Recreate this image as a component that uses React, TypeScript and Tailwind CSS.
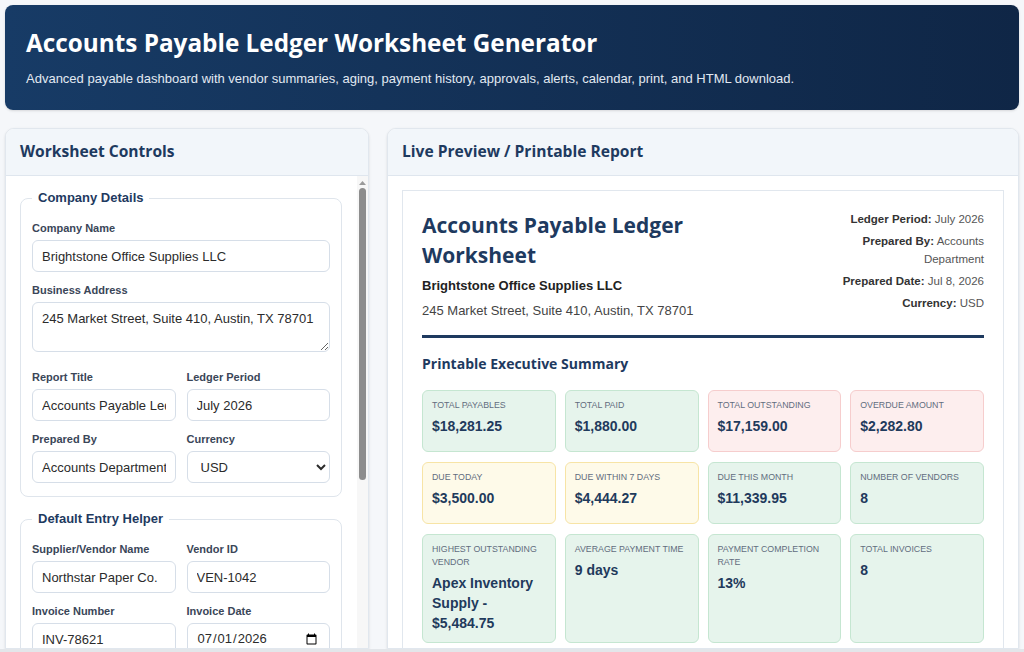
import { type ReactNode } from 'react';

const inputCls =
    'block h-[32px] w-full rounded-[6px] border border-[#d6dee8] bg-white px-[9px] text-[13px] text-[#2b2b2b] outline-none';

function Label({ children }: { children: ReactNode }) {
    return (
        <label className="mb-[5px] block text-[11px] font-bold leading-[14px] text-[#3a4658]">
            {children}
        </label>
    );
}

function Field({ label, children }: { label: string; children: ReactNode }) {
    return (
        <div>
            <Label>{label}</Label>
            {children}
        </div>
    );
}

function Group({ title, children }: { title: string; children: ReactNode }) {
    return (
        <fieldset className="rounded-[8px] border border-[#dfe5ec] px-[11px] pb-[13px] pt-[15px]">
            <legend className="px-[6px] text-[13px] font-bold leading-[16px] text-[#1e3a5f]">
                {title}
            </legend>
            {children}
        </fieldset>
    );
}

type Tone = 'green' | 'red' | 'yellow';

const tones: Record<Tone, string> = {
    green: 'bg-[#e6f4ec] border-[#c5e6d1]',
    red: 'bg-[#fdeeee] border-[#f6cdcd]',
    yellow: 'bg-[#fefae9] border-[#f7e4a6]',
};

function StatCard({
    label,
    value,
    tone,
}: {
    label: string;
    value: string;
    tone: Tone;
}) {
    return (
        <div
            className={`min-h-[62px] rounded-[6px] border px-[9px] pb-[9px] pt-[8px] ${tones[tone]}`}
        >
            <div className="mb-[4px] text-[8.8px] uppercase leading-[13px] text-[#626d7e]">
                {label}
            </div>
            <div className="text-[14px] font-bold leading-[20px] text-[#1f3a5c]">
                {value}
            </div>
        </div>
    );
}

const stats: { label: string; value: string; tone: Tone }[] = [
    { label: 'Total Payables', value: '$18,281.25', tone: 'green' },
    { label: 'Total Paid', value: '$1,880.00', tone: 'green' },
    { label: 'Total Outstanding', value: '$17,159.00', tone: 'red' },
    { label: 'Overdue Amount', value: '$2,282.80', tone: 'red' },
    { label: 'Due Today', value: '$3,500.00', tone: 'yellow' },
    { label: 'Due Within 7 Days', value: '$4,444.27', tone: 'yellow' },
    { label: 'Due This Month', value: '$11,339.95', tone: 'green' },
    { label: 'Number of Vendors', value: '8', tone: 'green' },
    {
        label: 'Highest Outstanding Vendor',
        value: 'Apex Inventory Supply - $5,484.75',
        tone: 'green',
    },
    { label: 'Average Payment Time', value: '9 days', tone: 'green' },
    { label: 'Payment Completion Rate', value: '13%', tone: 'green' },
    { label: 'Total Invoices', value: '8', tone: 'green' },
];

function Meta({ k, v }: { k: string; v: string }) {
    return (
        <p className="text-[11.5px] leading-[18px] text-[#555]">
            <span className="font-bold text-[#333]">{k}:</span> {v}
        </p>
    );
}

function Panel({ title, children }: { title: string; children: ReactNode }) {
    return (
        <section className="flex min-h-0 flex-col overflow-hidden rounded-t-[9px] border border-[#e1e7ee] bg-white shadow-sm">
            <div className="flex h-[47px] shrink-0 items-center border-b border-[#dfe6ee] bg-[#f2f6fa] px-[14px]">
                <h2 className="font-['Open_Sans',sans-serif] text-[15.6px] font-bold text-[#1e3a5f]">
                    {title}
                </h2>
            </div>
            {children}
        </section>
    );
}

function ScrollBar() {
    return (
        <div className="flex w-[11px] shrink-0 flex-col items-center bg-[#f7f7f7] pt-[5px]">
            <svg width="7" height="4" viewBox="0 0 7 4">
                <path d="M3.5 0 7 4H0z" fill="#9a9a9a" />
            </svg>
            <div className="mt-[3px] h-[292px] w-[7px] rounded-full bg-[#8d8d8d]" />
        </div>
    );
}

export default function App() {
    return (
        <div className="flex h-screen flex-col overflow-hidden bg-[#f5f7fa] font-['Liberation_Sans',Arial,sans-serif]">
            <div className="flex min-h-0 flex-1 flex-col gap-[18px] px-[5px] pt-[5px]">
                <header className="h-[105px] shrink-0 rounded-[8px] bg-linear-to-r from-[#173b66] to-[#0f2646] px-[21px] pt-[22px] shadow-sm">
                    <h1 className="font-['Open_Sans',sans-serif] text-[24.3px] font-bold leading-[32px] text-white">
                        Accounts Payable Ledger Worksheet Generator
                    </h1>
                    <p className="mt-[10px] text-[13px] leading-[20px] text-[#e2e9f2]">
                        Advanced payable dashboard with vendor summaries, aging,
                        payment history, approvals, alerts, calendar, print, and
                        HTML download.
                    </p>
                </header>

                <div className="grid min-h-0 flex-1 grid-cols-[364px_1fr] gap-[18px]">
                    <Panel title="Worksheet Controls">
                        <div className="flex min-h-0 flex-1">
                            <div className="min-w-0 flex-1 overflow-hidden pb-[15px] pl-[14px] pr-[15px] pt-[14px]">
                                <Group title="Company Details">
                                    <div className="mb-[11px]">
                                        <Field label="Company Name">
                                            <input
                                                className={inputCls}
                                                defaultValue="Brightstone Office Supplies LLC"
                                            />
                                        </Field>
                                    </div>
                                    <div className="mb-[18px]">
                                        <Field label="Business Address">
                                            <textarea
                                                className="block h-[50px] w-full resize-y rounded-[6px] border border-[#d6dee8] bg-white px-[9px] py-[7px] text-[13px] leading-[18px] text-[#2b2b2b] outline-none"
                                                defaultValue="245 Market Street, Suite 410, Austin, TX 78701"
                                            />
                                        </Field>
                                    </div>
                                    <div className="grid grid-cols-2 gap-x-[11px] gap-y-[11px]">
                                        <Field label="Report Title">
                                            <input
                                                className={inputCls}
                                                defaultValue="Accounts Payable Ledger Worksheet"
                                            />
                                        </Field>
                                        <Field label="Ledger Period">
                                            <input
                                                className={inputCls}
                                                defaultValue="July 2026"
                                            />
                                        </Field>
                                        <Field label="Prepared By">
                                            <input
                                                className={inputCls}
                                                defaultValue="Accounts Department"
                                            />
                                        </Field>
                                        <Field label="Currency">
                                            <select
                                                className={inputCls}
                                                defaultValue="USD"
                                            >
                                                <option>USD</option>
                                                <option>EUR</option>
                                                <option>GBP</option>
                                            </select>
                                        </Field>
                                    </div>
                                </Group>

                                <div className="mt-[14px]">
                                    <Group title="Default Entry Helper">
                                        <div className="grid grid-cols-2 gap-x-[11px] gap-y-[11px]">
                                            <Field label="Supplier/Vendor Name">
                                                <input
                                                    className={inputCls}
                                                    defaultValue="Northstar Paper Co."
                                                />
                                            </Field>
                                            <Field label="Vendor ID">
                                                <input
                                                    className={inputCls}
                                                    defaultValue="VEN-1042"
                                                />
                                            </Field>
                                            <Field label="Invoice Number">
                                                <input
                                                    className={inputCls}
                                                    defaultValue="INV-78621"
                                                />
                                            </Field>
                                            <Field label="Invoice Date">
                                                <input
                                                    type="date"
                                                    className={inputCls}
                                                    defaultValue="2026-07-01"
                                                />
                                            </Field>
                                            <Field label="Due Date">
                                                <input
                                                    type="date"
                                                    className={inputCls}
                                                    defaultValue="2026-07-31"
                                                />
                                            </Field>
                                            <Field label="Invoice Amount">
                                                <input
                                                    className={inputCls}
                                                    defaultValue="1250.00"
                                                />
                                            </Field>
                                        </div>
                                    </Group>
                                </div>
                            </div>
                            <ScrollBar />
                        </div>
                    </Panel>

                    <Panel title="Live Preview / Printable Report">
                        <div className="min-h-0 flex-1 overflow-hidden px-[14px] pt-[14px]">
                            <div className="border border-[#e1e7ee] bg-white px-[19px] pb-[20px] pt-[19px]">
                                <div className="flex justify-between gap-[20px] border-b-[3px] border-[#1e3a5f] pb-[15px]">
                                    <div>
                                        <h3 className="max-w-[330px] font-['Open_Sans',sans-serif] text-[21px] font-bold leading-[30px] text-[#1e3a5f]">
                                            Accounts Payable Ledger Worksheet
                                        </h3>
                                        <p className="mt-[7px] text-[13px] font-bold leading-[18px] text-[#222]">
                                            Brightstone Office Supplies LLC
                                        </p>
                                        <p className="mt-[7px] text-[13px] leading-[18px] text-[#444]">
                                            245 Market Street, Suite 410, Austin,
                                            TX 78701
                                        </p>
                                    </div>
                                    <div className="flex w-[146px] shrink-0 flex-col gap-[4px] text-right">
                                        <Meta k="Ledger Period" v="July 2026" />
                                        <Meta
                                            k="Prepared By"
                                            v="Accounts Department"
                                        />
                                        <Meta
                                            k="Prepared Date"
                                            v="Jul 8, 2026"
                                        />
                                        <Meta k="Currency" v="USD" />
                                    </div>
                                </div>

                                <h4 className="mb-[15px] mt-[15px] font-['Open_Sans',sans-serif] text-[14px] font-bold leading-[22px] text-[#1e3a5f]">
                                    Printable Executive Summary
                                </h4>
                                <div className="grid grid-cols-4 gap-x-[9px] gap-y-[10px]">
                                    {stats.map((s) => (
                                        <StatCard key={s.label} {...s} />
                                    ))}
                                </div>
                            </div>
                        </div>
                    </Panel>
                </div>
            </div>
            <div className="h-[3px] shrink-0 bg-[#e3e6ea]" />
        </div>
    );
}
